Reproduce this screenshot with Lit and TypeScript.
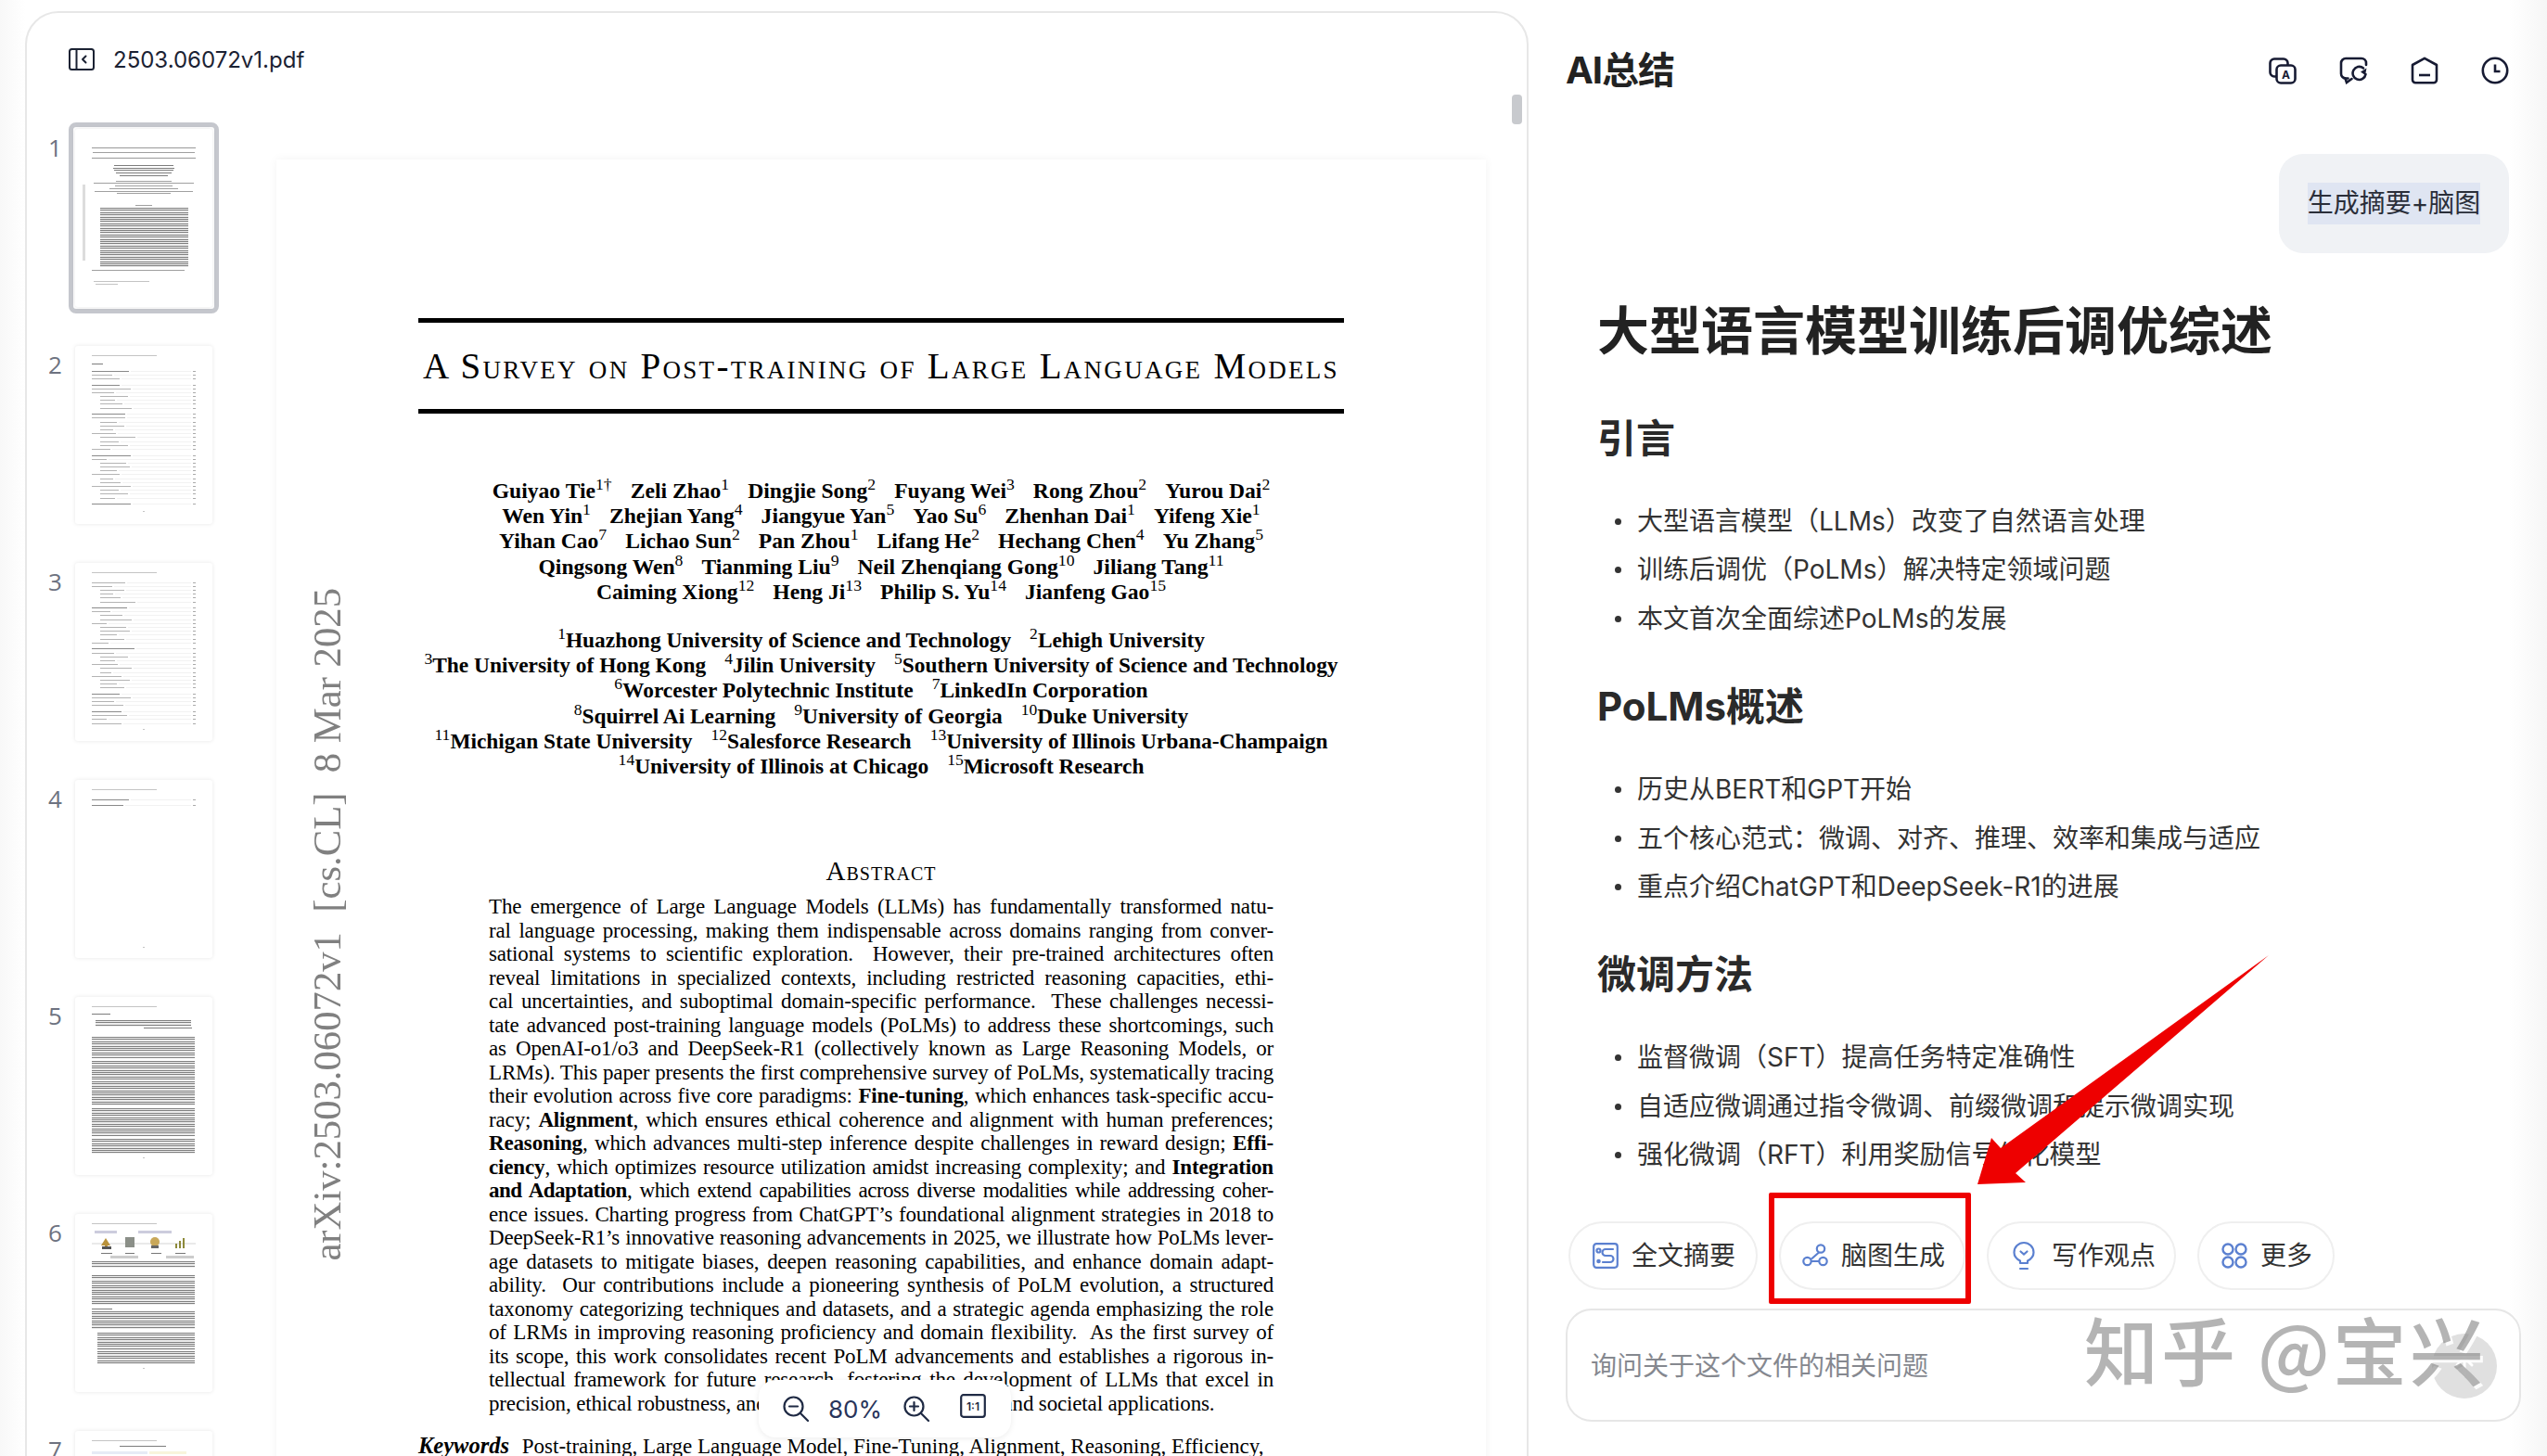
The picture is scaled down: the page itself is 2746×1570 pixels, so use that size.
import { LitElement, html, css } from "lit";
import { customElement } from "lit/decorators.js";

type Sup = [string, string];
const authors: Sup[][] = [
  [["Guiyao Tie", "1†"], ["Zeli Zhao", "1"], ["Dingjie Song", "2"], ["Fuyang Wei", "3"], ["Rong Zhou", "2"], ["Yurou Dai", "2"]],
  [["Wen Yin", "1"], ["Zhejian Yang", "4"], ["Jiangyue Yan", "5"], ["Yao Su", "6"], ["Zhenhan Dai", "1"], ["Yifeng Xie", "1"]],
  [["Yihan Cao", "7"], ["Lichao Sun", "2"], ["Pan Zhou", "1"], ["Lifang He", "2"], ["Hechang Chen", "4"], ["Yu Zhang", "5"]],
  [["Qingsong Wen", "8"], ["Tianming Liu", "9"], ["Neil Zhenqiang Gong", "10"], ["Jiliang Tang", "11"]],
  [["Caiming Xiong", "12"], ["Heng Ji", "13"], ["Philip S. Yu", "14"], ["Jianfeng Gao", "15"]],
];
const affils: Sup[][] = [
  [["1", "Huazhong University of Science and Technology"], ["2", "Lehigh University"]],
  [["3", "The University of Hong Kong"], ["4", "Jilin University"], ["5", "Southern University of Science and Technology"]],
  [["6", "Worcester Polytechnic Institute"], ["7", "LinkedIn Corporation"]],
  [["8", "Squirrel Ai Learning"], ["9", "University of Georgia"], ["10", "Duke University"]],
  [["11", "Michigan State University"], ["12", "Salesforce Research"], ["13", "University of Illinois Urbana-Champaign"]],
  [["14", "University of Illinois at Chicago"], ["15", "Microsoft Research"]],
];
const abstractLines = [
  "The emergence of Large Language Models (LLMs) has fundamentally transformed natu-",
  "ral language processing, making them indispensable across domains ranging from conver-",
  "sational systems to scientific exploration.  However, their pre-trained architectures often",
  "reveal limitations in specialized contexts, including restricted reasoning capacities, ethi-",
  "cal uncertainties, and suboptimal domain-specific performance.  These challenges necessi-",
  "tate advanced post-training language models (PoLMs) to address these shortcomings, such",
  "as OpenAI-o1/o3 and DeepSeek-R1 (collectively known as Large Reasoning Models, or",
  "LRMs). This paper presents the first comprehensive survey of PoLMs, systematically tracing",
  "their evolution across five core paradigms: *Fine-tuning*, which enhances task-specific accu-",
  "racy; *Alignment*, which ensures ethical coherence and alignment with human preferences;",
  "*Reasoning*, which advances multi-step inference despite challenges in reward design; *Effi-*",
  "*ciency*, which optimizes resource utilization amidst increasing complexity; and *Integration*",
  "*and Adaptation*, which extend capabilities across diverse modalities while addressing coher-",
  "ence issues. Charting progress from ChatGPT’s foundational alignment strategies in 2018 to",
  "DeepSeek-R1’s innovative reasoning advancements in 2025, we illustrate how PoLMs lever-",
  "age datasets to mitigate biases, deepen reasoning capabilities, and enhance domain adapt-",
  "ability.  Our contributions include a pioneering synthesis of PoLM evolution, a structured",
  "taxonomy categorizing techniques and datasets, and a strategic agenda emphasizing the role",
  "of LRMs in improving reasoning proficiency and domain flexibility.  As the first survey of",
  "its scope, this work consolidates recent PoLM advancements and establishes a rigorous in-",
  "tellectual framework for future research, fostering the development of LLMs that excel in",
];

const sections = [
  { h: "引言", items: ["大型语言模型（LLMs）改变了自然语言处理", "训练后调优（PoLMs）解决特定领域问题", "本文首次全面综述PoLMs的发展"] },
  { h: "PoLMs概述", items: ["历史从BERT和GPT开始", "五个核心范式：微调、对齐、推理、效率和集成与适应", "重点介绍ChatGPT和DeepSeek-R1的进展"] },
  { h: "微调方法", items: ["监督微调（SFT）提高任务特定准确性", "自适应微调通过指令微调、前缀微调和提示微调实现", "强化微调（RFT）利用奖励信号优化模型"] },
];

const widths = [40, 26, 34, 22, 30, 46, 28, 38, 24, 32, 42, 20, 36];
const toc = (levels: number[]) =>
  levels.map((l, i) => {
    if (l < 0) return html`<div class="gap"></div>`;
    const w = widths[i % widths.length] - l * 4;
    return html`<div class="toc ${l === 0 ? "bold" : ""}" style="padding-left:${l === 2 ? 9 : 0}px">
      <i class="bar" style="width:${w}px"></i><i class="dots"></i><i class="tick"></i>
    </div>`;
  });
const bar = (w: number, mt = 0, ml = 0, cls = "") =>
  html`<i class="bar ${cls}" style="width:${w}px;margin-top:${mt}px;margin-left:${ml}px"></i>`;
const para = (h: number, mt = 3, ml = 0, w = 111) =>
  html`<i class="para" style="height:${h}px;margin-top:${mt}px;margin-left:${ml}px;width:${w}px"></i>`;

const t1 = () => html`
  <div class="tb first">
    <i class="stamp"></i>
    ${bar(112, 0, 0, "rule")}
    ${bar(110, 4, 1)}
    ${bar(112, 5, 0, "rule")}
    ${[64, 66, 64, 60, 52].map((w, i) => bar(w, i ? 1.7 : 7, 56 - w / 2, "bold"))}
    ${[60, 108, 62, 74, 106, 58].map((w, i) => bar(w, i ? 1.7 : 5, 56 - w / 2))}
    ${bar(18, 12, 47)}
    ${para(64, 2, 9, 95)}
    ${bar(100, 3)}
    ${bar(60, 11, 2, "lite")}
    ${bar(24, 1.5, 4, "lite")}
  </div>`;
const t2 = () => html`
  <div class="tb">
    ${bar(70, 0, 0, "lite")}
    ${bar(12, 8, 0, "bold")}
    <div class="list">${toc([0, 1, 1, -1, 0, 1, 1, 2, 2, 2, 2, -1, 0, 1, 2, 2, 2, 1, 2, 2, 2, 1, -1, 0, 1, 2, 2, 2, 1, 2, 2, 1, 2, 2, 2, -1, 0])}</div>
    ${bar(2, 5, 55, "lite")}
  </div>`;
const t3 = () => html`
  <div class="tb">
    ${bar(70, 0, 0, "lite")}
    <div class="list top">${toc([1, 1, 2, 2, 2, 2, -1, 0, 1, 2, 2, 1, 2, 2, 2, 2, 1, -1, 0, 1, 2, 2, 1, 2, 2, 1, 2, 2, 2, -1, 0, 1, 1, 1, -1, 0, 1, 1, 1])}</div>
    ${bar(2, 4, 55, "lite")}
  </div>`;
const t4 = () => html`
  <div class="tb">
    ${bar(70, 0, 0, "lite")}
    <div class="list top">${toc([0, -1, 0])}</div>
    ${bar(2, 150, 55, "lite")}
  </div>`;
const t5 = () => html`
  <div class="tb">
    ${bar(70, 0, 0, "lite")}
    ${bar(20, 7, 0, "bold")}
    ${para(7, 6, 4, 103)}
    ${bar(52, 1, 56, "bold")}
    ${para(23, 9)}
    ${para(20, 3)}
    ${para(26, 2)}
    ${para(30, 3)}
    ${para(16, 3)}
    ${bar(2, 4, 55, "lite")}
  </div>`;
const t6 = () => html`
  <div class="tb">
    ${bar(70, 0, 0, "lite")}
    <svg class="fig" viewBox="0 0 112 30" width="112" height="30">
      <path d="M0 14H112" stroke="#bbb" stroke-width=".6"/>
      <rect x="3" y="0" width="24" height="3" fill="#ccd"/>
      <rect x="50" y="0" width="36" height="3" fill="#ccd"/>
      <path d="M10 16l5-8 5 8zM14 16h3v4h-3z" fill="#b9923b"/><rect x="11" y="17" width="10" height="3" fill="#555"/>
      <rect x="36" y="7" width="10" height="11" fill="#8b8f88"/>
      <circle cx="68" cy="12" r="5" fill="#c9a85a"/><rect x="64" y="16" width="8" height="3" fill="#666"/>
      <path d="M90 19v-5h2v5zM94 19v-8h2v8zM98 19v-11h2v11z" fill="#8d8a3a"/>
      <rect x="10" y="24" width="12" height="1" fill="#777"/><rect x="36" y="24" width="10" height="1" fill="#777"/>
      <rect x="64" y="24" width="11" height="1" fill="#777"/><rect x="90" y="24" width="11" height="1" fill="#777"/>
      <rect x="20" y="27" width="30" height="3" fill="#ccc"/><rect x="80" y="27" width="30" height="3" fill="#ccc"/>
    </svg>
    ${para(7, 3)}
    ${para(5, 8)}
    ${para(26, 1)}
    ${bar(22, 4, 0, "bold")}
    ${para(19, 2)}
    ${para(19, 4, 6, 105)}
    ${para(14, 1, 6, 105)}
    ${bar(2, 4, 55, "lite")}
  </div>`;
const t7 = () => html`
  <div class="tb">
    ${bar(70, 0, 0, "lite")}
    ${bar(50, 5, 30, "bold")}
    <div class="band"><i></i><i></i></div>
  </div>`;
const thumbs = [t1, t2, t3, t4, t5, t6, t7];

const runs = (line: string) =>
  line.split("*").map((p, i) => (i % 2 ? html`<b>${p}</b>` : p));

const I = {
  panel: html`<svg viewBox="0 0 28 24" width="28" height="24" fill="none" stroke="#1b2233" stroke-width="2"><rect x="1" y="1" width="26" height="22" rx="2.5"/><path d="M8.5 1v22"/><path d="M18.5 8.5l-3.5 3.5 3.500 3.500" stroke-linecap="round" stroke-linejoin="round"/></svg>`,
  translate: html`<svg viewBox="0 0 30 29" width="30" height="29" fill="none" stroke="#171b33" stroke-width="2.6"><path d="M8 20.5H6a4.5 4.5 0 0 1-4.5-4.5V6A4.5 4.5 0 0 1 6 1.5h10A4.5 4.5 0 0 1 20.5 6v2"/><rect x="8.5" y="8.5" width="20" height="19" rx="4.5"/><text x="18.5" y="23" text-anchor="middle" font-family="Inter, sans-serif" font-size="12" font-weight="700" fill="#171b33" stroke="none">A</text></svg>`,
  chat: html`<svg viewBox="0 0 31 30" width="31" height="30" fill="none" stroke="#171b33" stroke-width="2.6" stroke-linecap="round"><path d="M9.500 23.500H7a5 5 0 0 1-5-5V7a5 5 0 0 1 5-5h17a5 5 0 0 1 5 5v2"/><path d="M6.500 23.500l1.500 4.500 5.500-4"/><path d="M28.500 19a7 7 0 1 1-2.500-6.500"/><path d="M29.500 12.500l-1.500 7.500-5-3.500z" fill="#171b33" stroke="none"/></svg>`,
  home: html`<svg viewBox="0 0 30 30" width="30" height="30" fill="none" stroke="#171b33" stroke-width="2.6" stroke-linejoin="round"><path d="M15 1.800L28 9v16a3.200 3.200 0 0 1-3.200 3.200H5.200A3.200 3.200 0 0 1 2 25V9z"/><path d="M9 20h12"/></svg>`,
  clock: html`<svg viewBox="0 0 30 30" width="30" height="30" fill="none" stroke="#171b33" stroke-width="2.6"><circle cx="15" cy="15" r="13.200"/><path d="M15 8.500V16h5.500"/></svg>`,
  zoomOut: html`<svg viewBox="0 0 30 28" width="30" height="28" fill="none" stroke="#1f2a44" stroke-width="2.2" stroke-linecap="round"><circle cx="12.500" cy="11.500" r="10"/><path d="M8 11.500h9M20 19l8 8"/></svg>`,
  zoomIn: html`<svg viewBox="0 0 30 28" width="30" height="28" fill="none" stroke="#1f2a44" stroke-width="2.2" stroke-linecap="round"><circle cx="12.500" cy="11.500" r="10"/><path d="M8 11.500h9M12.500 7v9M20 19l8 8"/></svg>`,
  fit: html`<svg viewBox="0 0 28 26" width="28" height="26" fill="none" stroke="#1f2a44" stroke-width="2.2"><rect x="1.200" y="1.200" width="25.600" height="23.600" rx="2.500"/><text x="14" y="18" text-anchor="middle" font-family="Inter, sans-serif" font-size="12" font-weight="600" fill="#1f2a44" stroke="none">1:1</text></svg>`,
  sum: html`<svg viewBox="0 0 28 28" width="28" height="28" fill="none" stroke="#5b80d0" stroke-width="2.2" stroke-linecap="round"><rect x="1.200" y="1.200" width="25.600" height="25.600" rx="3"/><circle cx="6.500" cy="8.500" r="2"/><circle cx="6.500" cy="20" r="1.200" fill="#5b80d0"/><path d="M22 7h-8a3 3 0 0 0 0 7h5a3 3 0 0 1 0 7h-8"/></svg>`,
  mind: html`<svg viewBox="0 0 28 28" width="28" height="28" fill="none" stroke="#5b80d0" stroke-width="2.200"><circle cx="20" cy="6.500" r="4.200"/><circle cx="5.500" cy="20" r="4.200"/><circle cx="22.500" cy="20" r="4.200"/><path d="M18 10.500L10 17.500M9.700 20h8.600"/></svg>`,
  bulb: html`<svg viewBox="0 0 24 32" width="24" height="32" fill="none" stroke="#5b80d0" stroke-width="2.200" stroke-linecap="round"><path d="M8 24v-2.500C4 19.500 1.500 16 1.500 12.500a10.500 10.500 0 0 1 21 0c0 3.500-2.500 7-6.500 9V24z" stroke-linejoin="round"/><path d="M8 30h8M8.500 11.500l3.500 3 3.500-3"/></svg>`,
  more: html`<svg viewBox="0 0 28 28" width="28" height="28" fill="none" stroke="#5b80d0" stroke-width="2.400"><circle cx="7" cy="7" r="5.500"/><circle cx="21" cy="7" r="5.500"/><circle cx="7" cy="21" r="5.500"/><circle cx="21" cy="21" r="5.500"/></svg>`,
};

@customElement("app-root")
export class AppRoot extends LitElement {
  static styles = css`
    :host {
      display: block;
      position: relative;
      width: 2746px;
      height: 1570px;
      overflow: hidden;
      background: linear-gradient(90deg, #f8f8f8 0, #fff 27px);
      font-family: Inter, "Noto Sans CJK SC", sans-serif;
      color: #222;
    }
    .app { display: flex; height: 1570px; }

    /* ---- left card ---- */
    .card {
      position: relative;
      flex: none;
      box-sizing: border-box;
      width: 1621px;
      height: 1600px;
      margin: 12px 0 0 27px;
      border: 2px solid #e7e7e7;
      border-radius: 36px;
      background: #fff;
      overflow: hidden;
    }
    .cardhead {
      display: flex;
      align-items: center;
      gap: 20px;
      height: 100px;
      padding-left: 45px;
      font-size: 24px;
      color: #1b2233;
    }
    .cardhead svg { flex: none; }
    .scroll {
      position: absolute;
      left: 1601px;
      top: 88px;
      width: 11px;
      height: 32px;
      border-radius: 4px;
      background: #c8cace;
    }
    .body { display: flex; align-items: flex-start; }
    .rail {
      flex: none;
      width: 269px;
      padding-top: 18px;
      display: flex;
      flex-direction: column;
      gap: 28px;
    }
    .row { display: flex; height: 206px; }
    .num {
      flex: none;
      box-sizing: border-box;
      width: 36px;
      margin-left: 9px;
      padding: 7px 0 0 14px;
      font: 26px/40px "Open Sans", "Noto Sans", sans-serif;
      color: #6d7280;
    }
    .wrap {
      box-sizing: border-box;
      width: 162px;
      height: 206px;
      padding: 7px;
      border-radius: 8px;
    }
    .wrap.active { padding: 2px; border: 5px solid #c5c7cd; }
    .thumb {
      width: 148px;
      height: 192px;
      border-radius: 3px;
      background: #fff;
      box-shadow: 0 0 4px rgba(0, 0, 0, 0.1);
      overflow: hidden;
    }
    .tb {
      position: relative;
      display: flex;
      flex-direction: column;
      align-items: flex-start;
      padding: 10px 18px 0;
      filter: blur(0.4px);
    }
    .tb.first { padding-top: 20px; }
    .stamp { position: absolute; left: 8px; top: 60px; width: 3px; height: 82px; background: #dcdcdc; }
    .bar { display: block; flex: none; height: 1px; background: #a0a0a0; }
    .bar.lite { background: #c4c4c4; }
    .bar.bold { background: #7c7c7c; }
    .bar.rule { background: #999; }
    .para {
      display: block;
      flex: none;
      background: repeating-linear-gradient(#808080 0 1px, #ececec 1px 2.4px);
    }
    .list { width: 112px; margin-top: 5px; }
    .list.top { margin-top: 8px; }
    .toc { display: flex; align-items: center; height: 4.2px; gap: 2px; }
    .toc .bar { background: #b4b4b4; }
    .toc.bold .bar { background: #8a8a8a; }
    .dots { flex: 1; height: 1px; background: #f2f2f2; }
    .tick { width: 3px; height: 1px; background: #aaa; }
    .gap { height: 2.4px; }
    .fig { display: block; margin-top: 7px; }
    .band { display: flex; gap: 2px; margin-top: 5px; }
    .band i { display: block; width: 60px; height: 3px; background: #e6ebf5; }
    .band i + i { width: 40px; background: #f8f4dc; }

    /* ---- pdf page ---- */
    .page {
      position: relative;
      flex: none;
      box-sizing: border-box;
      width: 1304px;
      height: 1500px;
      margin-top: 58px;
      padding: 171px 153px 0;
      background: #fff;
      box-shadow: 0 0 10px rgba(0, 0, 0, 0.05);
      font-family: "Liberation Serif", serif;
      color: #000;
    }
    .arxiv {
      position: absolute;
      left: 31px;
      top: 462px;
      writing-mode: vertical-rl;
      transform: rotate(180deg);
      white-space: pre;
      font-size: 42.7px;
      line-height: 48px;
      color: #808080;
    }
    .title {
      border-top: 5px solid #000;
      border-bottom: 5px solid #000;
      height: 93px;
      display: flex;
      align-items: center;
      justify-content: center;
      font-variant: small-caps;
      font-size: 39px;
      letter-spacing: 2.3px;
      white-space: nowrap;
    }
    .auth { margin-top: 70px; }
    .ln {
      display: flex;
      justify-content: center;
      white-space: nowrap;
      font-weight: 700;
      font-size: 23.6px;
      line-height: 27.2px;
      gap: 20px;
    }
    .aff { margin-top: 25px; }
    .aff .ln { gap: 20px; font-size: 23.4px; }
    sup { font-size: 0.75em; font-weight: 400; line-height: 0; vertical-align: 0.5em; }
    .abs-h {
      margin-top: 84px;
      text-align: center;
      font-variant: small-caps;
      font-size: 29px;
      line-height: 30px;
      letter-spacing: 1px;
    }
    .abs {
      margin: 11px 0 0 76px;
      width: 846px;
      font-size: 23px;
      letter-spacing: -0.15px;
      line-height: 25.5px;
    }
    .abs div { text-align: justify; text-align-last: justify; white-space: pre-wrap; }
    .abs div.snug { letter-spacing: -0.5px; }
    .abs .last { text-align-last: left; }
    .abs b { font-weight: 700; }
    .kw { margin-top: 20px; font-size: 23px; line-height: 26px; white-space: nowrap; }
    .kw b { font-style: italic; font-size: 24.5px; margin-right: 8px; }

    .zoombar {
      position: absolute;
      left: 520px;
      top: 1316px;
      display: flex;
      align-items: center;
      box-sizing: border-box;
      width: 272px;
      height: 62px;
      padding-left: 25px;
      background: #fff;
      border-radius: 18px;
      box-shadow: 0 1px 6px rgba(0, 0, 0, 0.08);
      font: 26px Inter, sans-serif;
      color: #28345a;
    }
    .zoombar span { margin: 0 24px 0 20px; width: 56px; text-align: center; }
    .zoombar .fit { margin-left: 32px; }

    /* ---- right panel ---- */
    .side {
      position: relative;
      flex: 1;
      display: flex;
      flex-direction: column;
      min-width: 0;
      background: linear-gradient(90deg, #fff calc(100% - 41px), #f6f6f6 100%);
    }
    .sidehead {
      display: flex;
      align-items: center;
      justify-content: space-between;
      height: 150px;
      box-sizing: border-box;
      padding: 2px 41px 0 40px;
    }
    .sidehead h2 {
      margin: 0;
      font: 700 40px/1 Inter, "Noto Sans CJK SC", sans-serif;
      color: #222;
      letter-spacing: -1px;
    }
    .tools { display: flex; gap: 46px; align-items: center; }
    .bubble {
      align-self: flex-end;
      box-sizing: border-box;
      width: 248px;
      height: 107px;
      margin: 16px 41px 0 0;
      border-radius: 26px;
      background: #f0f2f5;
      display: flex;
      align-items: center;
      justify-content: center;
    }
    .bubble span {
      font-size: 28px;
      line-height: 45px;
      background: #dfe5f2;
      color: #2a2e39;
      white-space: nowrap;
    }
    .md { padding-left: 74px; }
    .md h1 { margin: 48px 0 0; font: 700 56px/72px Inter, "Noto Sans CJK SC", sans-serif; color: #222; }
    .md h2 { margin: 41px 0 0; font: 700 42px/56px Inter, "Noto Sans CJK SC", sans-serif; color: #2a2a2a; }
    .md h1 + section h2 { margin-top: 52px; }
    .md ul { list-style: none; margin: 35px 0 0; padding: 0 0 0 43px; }
    .md li { position: relative; font-size: 28px; line-height: 52.4px; color: #333; white-space: nowrap; }
    .md li::before {
      content: "";
      position: absolute;
      left: -24px;
      top: 23px;
      width: 7px;
      height: 7px;
      border-radius: 50%;
      background: #333;
    }
    .foot { margin-top: auto; padding: 0 28px 37px 40px; }
    .chips { display: flex; gap: 23px; margin-left: 3px; }
    .chip {
      box-sizing: border-box;
      display: flex;
      align-items: center;
      gap: 14px;
      height: 74px;
      padding: 0 22px 4px 24px;
      border: 2px solid #efefef;
      border-radius: 37px;
      background: #fff;
      font-size: 28px;
      color: #333;
      white-space: nowrap;
    }
    .chip svg { margin-top: 4px; }
    .chip.mindc { padding: 0 20px 4px 23px; }
    .chip.bulbc { padding: 0 20px 4px 26px; gap: 18px; }
    .input {
      position: relative;
      box-sizing: border-box;
      width: 1030px;
      height: 122px;
      margin-top: 20px;
      padding: 0 0 3px 25px;
      display: flex;
      align-items: center;
      border: 2px solid #e6e6e6;
      border-radius: 28px;
      background: #fff;
      font-size: 28px;
      color: #85888f;
    }
    .send {
      position: absolute;
      right: 24px;
      top: 25px;
      width: 70px;
      height: 70px;
      border-radius: 50%;
      background: #e0e0e0;
      display: flex;
      align-items: center;
      justify-content: center;
    }
    .mark {
      position: absolute;
      left: 2247px;
      top: 1403px;
      font: 500 80px/100px "Noto Sans CJK SC", sans-serif;
      color: rgba(130, 130, 130, 0.6);
      text-shadow: 3px 3px 0 rgba(255, 255, 255, 0.9);
      white-space: pre;
      letter-spacing: 3px;
    }
    .redbox {
      position: absolute;
      left: 1907px;
      top: 1286px;
      box-sizing: border-box;
      width: 218px;
      height: 120px;
      border: 6px solid #ee0000;
      border-radius: 2px;
    }
    .arrow { position: absolute; left: 0; top: 0; pointer-events: none; }
  `;

  render() {
    return html`
      <div class="app">
        <div class="card">
          <div class="cardhead">${I.panel}<span>2503.06072v1.pdf</span></div>
          <div class="body">
            <div class="rail">
              ${thumbs.map(
                (t, i) => html`<div class="row">
                  <div class="num">${i + 1}</div>
                  <div class="wrap ${i === 0 ? "active" : ""}"><div class="thumb">${t()}</div></div>
                </div>`
              )}
            </div>
            <div class="page">
              <div class="arxiv">arXiv:2503.06072v1  [cs.CL]  8 Mar 2025</div>
              <div class="title">A Survey on Post-training of Large Language Models</div>
              <div class="auth">
                ${authors.map(
                  (l) => html`<div class="ln">${l.map(([n, s]) => html`<span>${n}<sup>${s}</sup></span>`)}</div>`
                )}
              </div>
              <div class="aff">
                ${affils.map(
                  (l) => html`<div class="ln">${l.map(([s, n]) => html`<span><sup>${s}</sup>${n}</span>`)}</div>`
                )}
              </div>
              <div class="abs-h">Abstract</div>
              <div class="abs">
                ${abstractLines.map((l, i) => html`<div class="${i === 12 ? "snug" : ""}">${runs(l)}</div>`)}
                <div class="last">precision, ethical robustness, and versatility across academic and societal applications.</div>
              </div>
              <div class="kw"><b>Keywords</b> Post-training, Large Language Model, Fine-Tuning, Alignment, Reasoning, Efficiency,</div>
              <div class="zoombar">
                ${I.zoomOut}<span>80%</span>${I.zoomIn}<div class="fit">${I.fit}</div>
              </div>
            </div>
          </div>
          <div class="scroll"></div>
        </div>

        <div class="side">
          <div class="sidehead">
            <h2>AI总结</h2>
            <div class="tools">${I.translate}${I.chat}${I.home}${I.clock}</div>
          </div>
          <div class="bubble"><span>生成摘要+脑图</span></div>
          <div class="md">
            <h1>大型语言模型训练后调优综述</h1>
            ${sections.map(
              (s) => html`<section>
                <h2>${s.h}</h2>
                <ul>${s.items.map((t) => html`<li>${t}</li>`)}</ul>
              </section>`
            )}
          </div>
          <div class="foot">
            <div class="chips">
              <div class="chip">${I.sum}全文摘要</div>
              <div class="chip mindc">${I.mind}脑图生成</div>
              <div class="chip bulbc">${I.bulb}写作观点</div>
              <div class="chip">${I.more}更多</div>
            </div>
            <div class="input">
              询问关于这个文件的相关问题
              <div class="send">
                <svg viewBox="0 0 30 30" width="30" height="30" fill="none" stroke="#fff" stroke-width="3" stroke-linecap="round" stroke-linejoin="round"><path d="M15 25V6M7 14l8-8 8 8"/></svg>
              </div>
            </div>
          </div>
        </div>
      </div>

      <div class="mark">知乎 @宝兴</div>
      <div class="redbox"></div>
      <svg class="arrow" width="2746" height="1570" viewBox="0 0 2746 1570">
        <polygon points="2446,1030 2173,1265 2184,1275 2132,1277 2147,1227 2157,1238" fill="#ee0000" />
      </svg>
    `;
  }
}
